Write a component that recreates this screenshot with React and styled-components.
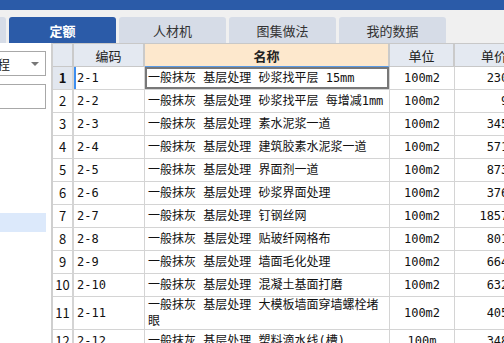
import styled, { createGlobalStyle } from "styled-components"

const tabs = ["清单", "定额", "人材机", "图集做法", "我的数据"]

const rows = [
  { no: 1, code: "2-1", name: "一般抹灰 基层处理 砂浆找平层 15mm", unit: "100m2", price: "230.71" },
  { no: 2, code: "2-2", name: "一般抹灰 基层处理 砂浆找平层 每增减1mm", unit: "100m2", price: "9.53" },
  { no: 3, code: "2-3", name: "一般抹灰 基层处理 素水泥浆一道", unit: "100m2", price: "345.62" },
  { no: 4, code: "2-4", name: "一般抹灰 基层处理 建筑胶素水泥浆一道", unit: "100m2", price: "571.20" },
  { no: 5, code: "2-5", name: "一般抹灰 基层处理 界面剂一道", unit: "100m2", price: "873.14" },
  { no: 6, code: "2-6", name: "一般抹灰 基层处理 砂浆界面处理", unit: "100m2", price: "376.85" },
  { no: 7, code: "2-7", name: "一般抹灰 基层处理 钉钢丝网", unit: "100m2", price: "1857.30" },
  { no: 8, code: "2-8", name: "一般抹灰 基层处理 贴玻纤网格布", unit: "100m2", price: "801.44" },
  { no: 9, code: "2-9", name: "一般抹灰 基层处理 墙面毛化处理", unit: "100m2", price: "664.92" },
  { no: 10, code: "2-10", name: "一般抹灰 基层处理 混凝土基面打磨", unit: "100m2", price: "632.18" },
  { no: 11, code: "2-11", name: "一般抹灰 基层处理 大模板墙面穿墙螺栓堵眼", unit: "100m2", price: "405.66" },
  { no: 12, code: "2-12", name: "一般抹灰 基层处理 塑料滴水线(槽)", unit: "100m", price: "348.09" },
]

export default function App(){
    return(
        <>
        <GlobalStyle/>
        <Page>
            <TopBar/>
            <TabStrip>
                {tabs.map((t, i)=>(
                    <Tab key={t} $active={i === 1}>{t}</Tab>
                ))}
            </TabStrip>
            <Body>
                <Side>
                    <Select>
                        <span>工程</span>
                        <Arrow/>
                    </Select>
                    <Search/>
                    <TreeItem/>
                </Side>
                <Grid>
                    <HeadRow>
                        <HeadCell/>
                        <HeadCell>编码</HeadCell>
                        <HeadCell $current>名称</HeadCell>
                        <HeadCell>单位</HeadCell>
                        <HeadCell>单价</HeadCell>
                    </HeadRow>
                    {rows.map((r)=>{
                        const sel = r.no === 1
                        return(
                            <Row key={r.no}>
                                <NumCell $selected={sel}>{r.no}</NumCell>
                                <CodeCell $selected={sel}>{r.code}</CodeCell>
                                <NameCell $active={sel}>{r.name}</NameCell>
                                <UnitCell>{r.unit}</UnitCell>
                                <PriceCell>{r.price}</PriceCell>
                            </Row>
                        )
                    })}
                </Grid>
            </Body>
        </Page>
        </>
    )
}

const GlobalStyle = createGlobalStyle`
    html, body{
        margin:0;
        padding:0;
        background:#fff;
    }
    body{
        font-family: "Noto Sans CJK SC", "Noto Sans", sans-serif;
    }
`

const Page = styled.div`
    width:504px;
    height:343px;
    overflow:hidden;
    display:flex;
    flex-direction:column;
`
const TopBar = styled.div`
    height:10px;
    background:#2b5ba8;
    flex-shrink:0;
`
const TabStrip = styled.div`
    height:33px;
    box-sizing:border-box;
    padding-top:7px;
    background:#f0f0f0;
    display:flex;
    gap:3px;
    margin-left:-101px;
    flex-shrink:0;
`
const Tab = styled.div`
    width:107px;
    height:26px;
    flex-shrink:0;
    border-radius:3px 3px 0 0;
    display:flex;
    justify-content:center;
    align-items:center;
    font-size:13px;
    background:${p => p.$active ? "#2b5ba8" : "#d6dce7"};
    color:${p => p.$active ? "#fff" : "#333"};
    font-weight:${p => p.$active ? "bold" : "normal"};
`
const Body = styled.div`
    flex:1;
    display:flex;
    overflow:hidden;
`
const Side = styled.div`
    width:51px;
    flex-shrink:0;
    border-right:2px solid #cfcfcf;
    background:#fff;
    padding-top:8px;
    overflow:hidden;
`
const Select = styled.div`
    margin-left:-20px;
    width:66px;
    height:25px;
    box-sizing:border-box;
    border:1px solid #a8a8a8;
    display:flex;
    align-items:center;
    justify-content:space-between;
    padding:0 6px 0 3px;
    font-size:13px;
    color:#222;
`
const Arrow = styled.div`
    width:0;
    height:0;
    border-left:4px solid transparent;
    border-right:4px solid transparent;
    border-top:4px solid #777;
`
const Search = styled.div`
    margin:8px 0 0 -20px;
    width:66px;
    height:25px;
    box-sizing:border-box;
    border:1px solid #a8a8a8;
`
const TreeItem = styled.div`
    margin-top:104px;
    width:46px;
    height:19px;
    background:#dce9fb;
`
const Grid = styled.div`
    flex:1;
    overflow:hidden;
    font-size:12px;
    color:#111;
`
const cols = "21px 71px 245px 65px 80px"

const HeadRow = styled.div`
    display:grid;
    grid-template-columns:${cols};
    height:23px;
    border-top:1px solid #c8c8c8;
`
const HeadCell = styled.div`
    box-sizing:border-box;
    display:flex;
    justify-content:center;
    align-items:center;
    font-size:13px;
    color:#222;
    background:${p => p.$current ? "#fde8cd" : "#e4e9f1"};
    font-weight:${p => p.$current ? "bold" : "normal"};
    border-right:2px solid #cacaca;
    border-bottom:${p => p.$current ? "1px solid #5a9be6" : "1px solid #c8c8c8"};
`
const Row = styled.div`
    display:grid;
    grid-template-columns:${cols};
    min-height:23px;
    font-family:"DejaVu Sans Mono", "Noto Sans CJK SC", monospace;
`
const Cell = styled.div`
    box-sizing:border-box;
    display:flex;
    align-items:center;
    line-height:16px;
    border-right:1px solid #d4d4d4;
    border-bottom:1px solid #d4d4d4;
`
const NumCell = styled(Cell)`
    justify-content:center;
    font-size:13px;
    font-family:"Noto Sans CJK SC", sans-serif;
    background:${p => p.$selected ? "#e2e7ef" : "#fff"};
    font-weight:${p => p.$selected ? "bold" : "normal"};
    border-right:2px solid #d4d4d4;
`
const CodeCell = styled(Cell)`
    padding-left:3px;
    box-shadow:${p => p.$selected ? "inset 2px 0 #3d8ef0" : "none"};
`
const NameCell = styled(Cell)`
    padding:0 4px 0 3px;
    box-shadow:${p => p.$active ? "inset 0 0 0 2px #787878" : "none"};
`
const UnitCell = styled(Cell)`
    justify-content:center;
`
const PriceCell = styled(Cell)`
    justify-content:flex-end;
    padding-right:4px;
`
